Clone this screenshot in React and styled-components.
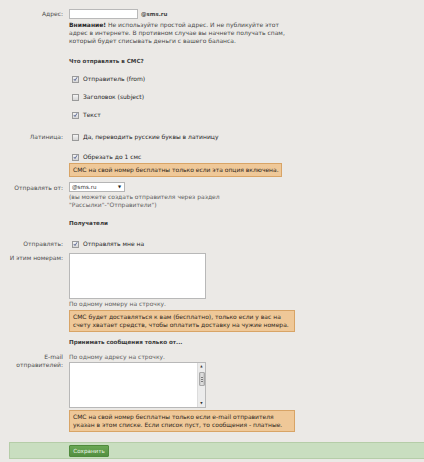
import React from "react";
import styled, { createGlobalStyle } from "styled-components";

const Global = createGlobalStyle`
  html, body { margin: 0; padding: 0; background: #ebe9e6; }
  body { font-family: "DejaVu Sans", Verdana, sans-serif; font-size: 6px; line-height: 8px; color: #333; }
  * { box-sizing: border-box; }
`;

const Page = styled.div`
  width: 424px;
  height: 462px;
  overflow: hidden;
  display: flex;
  flex-direction: column;
`;

const Row = styled.div`
  display: grid;
  grid-template-columns: 63px 1fr;
  column-gap: 6px;
  margin-top: ${(p) => p.$mt || 0}px;
  align-items: ${(p) => p.$align || "start"};
`;

const Label = styled.div`
  text-align: right;
  color: #4e4e4e;
  white-space: nowrap;
  line-height: ${(p) => p.$lh || 8}px;
  padding-top: ${(p) => p.$pt || 0}px;
`;

const Field = styled.div`
  display: flex;
  flex-direction: column;
  align-items: flex-start;
`;

const Inline = styled.div`
  display: flex;
  align-items: center;
  gap: 3px;
`;

const TextInput = styled.div`
  width: 69px;
  height: 10px;
  background: #fff;
  border: 1px solid #b9b9b9;
`;

const Domain = styled.span`
  font-weight: bold;
  color: #444;
  font-size: 5.5px;
`;

const Note = styled.div`
  color: #4a4a4a;
  white-space: nowrap;
  margin-top: ${(p) => p.$mt || 0}px;
  b { color: #2a2a2a; }
`;

const Heading = styled.div`
  font-weight: bold;
  color: #3a3a3a;
  font-size: 5.6px;
  white-space: nowrap;
`;

const Check = styled.label`
  display: flex;
  align-items: center;
  gap: 4px;
  padding-left: 3px;
  height: 8px;
  color: #262626;
  white-space: nowrap;
`;

const Box = styled.span`
  width: 7px;
  height: 7px;
  border: 1px solid #9a9a9a;
  background: linear-gradient(#f4f4f4, #d6d6d6);
  display: inline-flex;
  align-items: center;
  justify-content: center;
  flex: none;
`;

const Warn = styled.div`
  margin-top: ${(p) => p.$mt || 0}px;
  width: ${(p) => p.$w}px;
  background: #efc898;
  border: 1px solid #d8a466;
  padding: 2px 3px;
  color: #2e2620;
  white-space: nowrap;
  line-height: 8px;
`;

const Select = styled.div`
  width: 56px;
  height: 10px;
  background: #fff;
  border: 1px solid #b5b5b5;
  display: flex;
  align-items: center;
  justify-content: space-between;
  padding: 0 3px 0 2px;
  color: #333;
  font-size: 5.6px;
`;

const Arrow = styled.span`
  font-size: 4px;
  color: #222;
`;

const TextArea = styled.div`
  width: 137px;
  height: 46px;
  background: #fff;
  border: 1px solid #b8b8b8;
  margin-top: ${(p) => p.$mt || 0}px;
  display: flex;
  justify-content: flex-end;
`;

const Scroll = styled.div`
  width: 8px;
  height: 100%;
  background: #ececec;
  border-left: 1px solid #dcdcdc;
  display: flex;
  flex-direction: column;
  align-items: center;
  justify-content: space-between;
  padding: 2px 0;
`;

const Thumb = styled.div`
  width: 6px;
  height: 14px;
  background: linear-gradient(90deg, #c8c8c8, #e4e4e4, #c0c0c0);
  border: 1px solid #a8a8a8;
  border-radius: 1px;
  margin-bottom: 12px;
  display: flex;
  flex-direction: column;
  justify-content: center;
  gap: 1px;
  padding: 0 1px;
  span { display: block; height: 1px; background: #7a7a7a; }
`;

const ScrollArrow = styled.span`
  font-size: 3px;
  line-height: 3px;
  color: #333;
`;

const Hint = styled.div`
  color: #5e5e5e;
  white-space: nowrap;
  margin-top: ${(p) => p.$mt || 0}px;
`;

const Footer = styled.div`
  margin: 10px 0 0 9px;
  height: 17px;
  background: #c9dec0;
  border: 1px solid #b5cda8;
  border-right: none;
  display: flex;
  align-items: center;
  padding-left: 59px;
`;

const Button = styled.button`
  width: 40px;
  height: 12px;
  border: 1px solid #4f8a3c;
  border-radius: 1px;
  background: linear-gradient(#6aa855, #538f40);
  color: #eef6ea;
  font-family: "DejaVu Sans", Verdana, sans-serif;
  font-size: 5.6px;
  padding: 0;
`;

function CheckBox({ checked, children }) {
  return (
    <Check>
      <Box>
        {checked && (
          <svg width="6" height="6" viewBox="0 0 6 6">
            <path d="M1 3 L2.4 4.8 L5 0.8" fill="none" stroke="#2e3f7a" strokeWidth="0.9" />
          </svg>
        )}
      </Box>
      {children}
    </Check>
  );
}

export default function App() {
  return (
    <Page>
      <Global />
      <Row $mt={9} $align="center">
        <Label $lh={10}>Адрес:</Label>
        <Inline>
          <TextInput />
          <Domain>@sms.ru</Domain>
        </Inline>
      </Row>
      <Row $mt={2}>
        <span />
        <Note>
          <b>Внимание!</b> Не используйте простой адрес. И не публикуйте этот
          <br />
          адрес в интернете. В противном случае вы начнете получать спам,
          <br />
          который будет списывать деньги с вашего баланса.
        </Note>
      </Row>
      <Row $mt={12}>
        <span />
        <Heading>Что отправлять в СМС?</Heading>
      </Row>
      <Row $mt={10}>
        <span />
        <CheckBox checked>Отправитель (from)</CheckBox>
      </Row>
      <Row $mt={10}>
        <span />
        <CheckBox>Заголовок (subject)</CheckBox>
      </Row>
      <Row $mt={10}>
        <span />
        <CheckBox checked>Текст</CheckBox>
      </Row>
      <Row $mt={14}>
        <Label>Латиница:</Label>
        <CheckBox>Да, переводить русские буквы в латиницу</CheckBox>
      </Row>
      <Row $mt={12}>
        <span />
        <Field>
          <CheckBox checked>Обрезать до 1 смс</CheckBox>
          <Warn $mt={2} $w={213}>СМС на свой номер бесплатны только если эта опция включена.</Warn>
        </Field>
      </Row>
      <Row $mt={5}>
        <Label $pt={2}>Отправлять от:</Label>
        <Field>
          <Select>
            <span>@sms.ru</span>
            <Arrow>▼</Arrow>
          </Select>
          <Hint $mt={1}>
            (вы можете создать отправителя через раздел
            <br />
            "Рассылки"-"Отправители")
          </Hint>
        </Field>
      </Row>
      <Row $mt={10}>
        <span />
        <Heading>Получатели</Heading>
      </Row>
      <Row $mt={13}>
        <Label>Отправлять:</Label>
        <CheckBox checked>Отправлять мне на</CheckBox>
      </Row>
      <Row $mt={5}>
        <Label $pt={1}>И этим номерам:</Label>
        <Field>
          <TextArea />
          <Hint $mt={1}>По одному номеру на строчку.</Hint>
          <Warn $mt={2} $w={226}>
            СМС будет доставляться к вам (бесплатно), только если у вас на
            <br />
            счету хватает средств, чтобы оплатить доставку на чужие номера.
          </Warn>
        </Field>
      </Row>
      <Row $mt={6}>
        <span />
        <Heading>Принимать сообщения только от...</Heading>
      </Row>
      <Row $mt={7}>
        <Label>
          E-mail
          <br />
          отправителей:
        </Label>
        <Field>
          <Hint>По одному адресу на строчку.</Hint>
          <TextArea $mt={1}>
            <Scroll>
              <ScrollArrow>▲</ScrollArrow>
              <Thumb>
                <span />
                <span />
                <span />
              </Thumb>
              <ScrollArrow>▼</ScrollArrow>
            </Scroll>
          </TextArea>
          <Warn $mt={2} $w={226}>
            СМС на свой номер бесплатны только если e-mail отправителя
            <br />
            указан в этом списке. Если список пуст, то сообщения - платные.
          </Warn>
        </Field>
      </Row>
      <Footer>
        <Button>Сохранить</Button>
      </Footer>
    </Page>
  );
}
